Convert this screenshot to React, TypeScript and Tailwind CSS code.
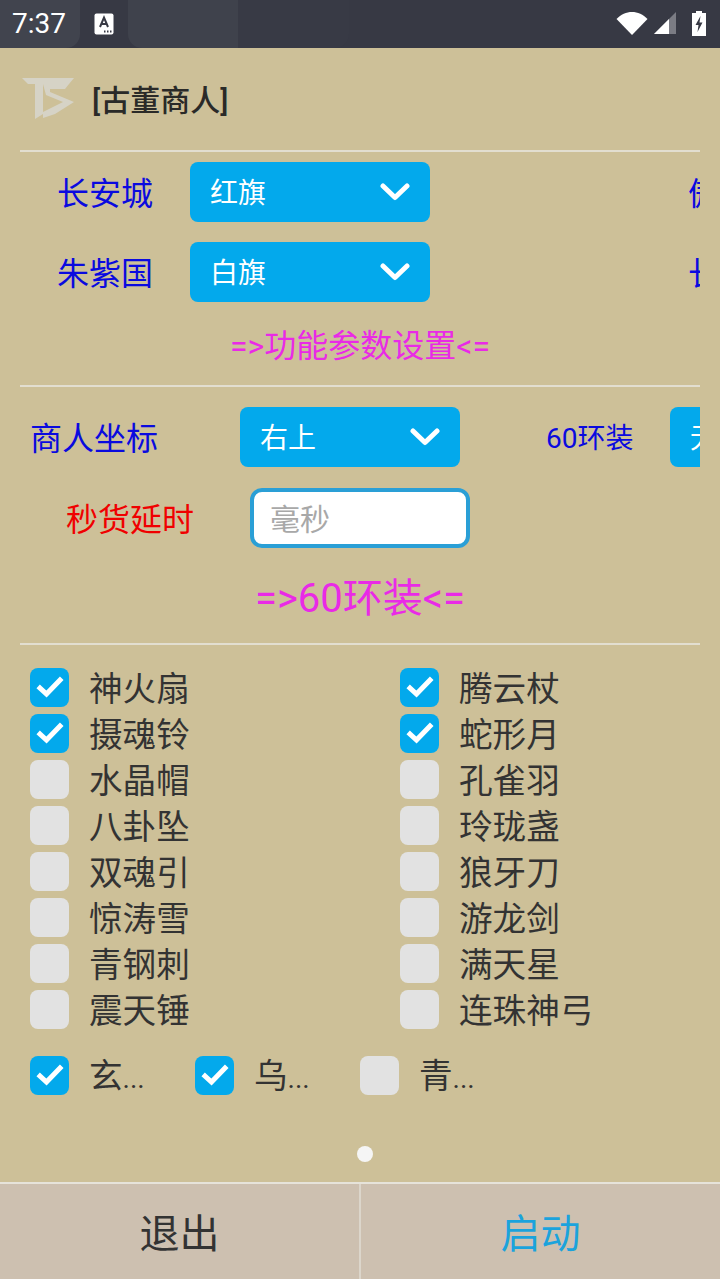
import React from "react";

const FONT = "font-['Roboto','Noto_Sans_CJK_SC',sans-serif]";

function Chevron() {
  return (
    <svg width="30" height="20" viewBox="0 0 30 20" fill="none" className="shrink-0">
      <path d="M3 4 L15 15.5 L27 4" stroke="#ffffff" strokeWidth="5" strokeLinecap="round" strokeLinejoin="round" />
    </svg>
  );
}

function Select({ text, width }: { text: string; width: string }) {
  return (
    <div className={`${width} h-[60px] shrink-0 rounded-[8px] bg-[#03a9ec] flex items-center justify-between pl-[20px] pr-[20px]`}>
      <span className="text-[28px] leading-none text-white mt-[4px]">{text}</span>
      <Chevron />
    </div>
  );
}

function Box({ on }: { on: boolean }) {
  return (
    <div className={`w-[39px] h-[39px] shrink-0 rounded-[8px] flex items-center justify-center ${on ? "bg-[#03a9ec]" : "bg-[#e2e2e2]"}`}>
      {on && (
        <svg width="30" height="26" viewBox="0 0 30 26" fill="none">
          <path d="M5 14 L11.5 20 L25 6" stroke="#ffffff" strokeWidth="5" strokeLinecap="square" />
        </svg>
      )}
    </div>
  );
}

function Check({ label, on }: { label: string; on: boolean }) {
  return (
    <div className="h-[46px] flex items-center">
      <Box on={on} />
      <span className="ml-[20px] text-[33.6px] leading-none text-[#333333] mt-[5px]">{label}</span>
    </div>
  );
}

function Short({ label, on }: { label: string; on: boolean }) {
  return (
    <div className="w-[165px] h-[40px] flex items-center shrink-0">
      <Box on={on} />
      <span className="ml-[20px] w-[60px] h-[40px] pt-[4px] text-[33.6px] leading-[36px] text-[#333333] whitespace-nowrap overflow-hidden">{label}<span className="text-[28px]">...</span></span>
    </div>
  );
}

function Divider() {
  return <div className="h-[2px] shrink-0 bg-[#e2ded0]" />;
}

const left = [
  ["神火扇", true],
  ["摄魂铃", true],
  ["水晶帽", false],
  ["八卦坠", false],
  ["双魂引", false],
  ["惊涛雪", false],
  ["青钢刺", false],
  ["震天锤", false],
] as const;

const right = [
  ["腾云杖", true],
  ["蛇形月", true],
  ["孔雀羽", false],
  ["玲珑盏", false],
  ["狼牙刀", false],
  ["游龙剑", false],
  ["满天星", false],
  ["连珠神弓", false],
] as const;

const label = "shrink-0 text-[32px] leading-none text-[#0a0adf] mt-[4px]";

export default function App() {
  return (
    <div className={`w-[720px] h-[1279px] flex flex-col overflow-hidden bg-[#cdc098] ${FONT}`}>
      {/* status bar */}
      <div className="h-[48px] shrink-0 bg-[#373944] flex items-stretch">
        <div className="w-[80px] bg-[#41444e] rounded-br-[14px] flex items-center pl-[12px]">
          <span className="text-[28px] leading-none text-white">7:37</span>
        </div>
        <div className="w-[48px] flex items-center pl-[14px]">
          <svg width="20" height="22" viewBox="0 0 20 22">
            <rect x="0.5" y="0.5" width="19" height="21" rx="2" fill="#ffffff" />
            <path d="M6 14 L10 4.5 L14 14 M7.4 11 H12.6" stroke="#373944" strokeWidth="2" fill="none" />
            <path d="M10 18.5 h1.5 M13 18.5 h1.5 M16 18.5 h1.5" stroke="#373944" strokeWidth="2" />
          </svg>
        </div>
        <div className="w-[110px] bg-[#3f424c] rounded-bl-[14px]" />
        <div className="w-[111px] bg-[#383a45] rounded-br-[14px]" />
        <div className="flex-1 flex items-center justify-end pr-[14px]">
          <svg width="32" height="24" viewBox="0 0 32 24" className="mr-[6px] mt-[-2px]">
            <path d="M0.5 8 C9 -1.5 23 -1.5 31.5 8 L16 24 Z" fill="#ffffff" />
          </svg>
          <svg width="22" height="22" viewBox="0 0 22 22" className="mr-[16px] mt-[-2px]">
            <path d="M0 22 L22 0 V22 Z" fill="#7b7c84" />
            <path d="M0 22 L15 7 V22 Z" fill="#ffffff" />
          </svg>
          <svg width="14" height="25" viewBox="0 0 14 25" className="mt-[-2px]">
            <path d="M4 0 H10 V2 H14 V25 H0 V2 H4 Z" fill="#ffffff" />
            <path d="M8.5 5 L3.5 14 H6.5 L5.5 21 L10.5 11.5 H7.5 Z" fill="#373944" />
          </svg>
        </div>
      </div>

      {/* content */}
      <div className="flex-1 flex flex-col px-[20px] overflow-hidden">
        <div className="h-[102px] shrink-0 flex items-center">
          <svg width="52" height="41" viewBox="0 0 52 41" className="ml-[2px] shrink-0 mt-[-2px]">
            <path d="M0 0 H52 L47 6 H21 V36 L13 41 V6 H6 Z" fill="#d6d3c6" />
            <path d="M21 6 H47 L43 11 H28 V14 L52 24 L33 36 L21 40 V34 L41 24 L24 17 Z" fill="#d6d3c6" />
          </svg>
          <span className="ml-[18px] text-[30px] leading-none font-medium text-[#2a2a28] whitespace-nowrap mt-[4px]">[古董商人]</span>
        </div>
        <Divider />

        <div className="overflow-hidden shrink-0">
          <div className="mt-[10px] h-[60px] flex items-center w-[900px]">
            <span className={`w-[170px] pl-[37px] ${label}`}>长安城</span>
            <Select text="红旗" width="w-[240px]" />
            <span className={`ml-[258px] ${label}`}>傲来国</span>
          </div>
          <div className="mt-[20px] h-[60px] flex items-center w-[900px]">
            <span className={`w-[170px] pl-[37px] ${label}`}>朱紫国</span>
            <Select text="白旗" width="w-[240px]" />
            <span className={`ml-[258px] ${label}`}>长寿村</span>
          </div>
        </div>

        <div className="h-[83px] shrink-0 flex items-center justify-center text-[32px] leading-none text-[#e92ae6] whitespace-nowrap"><span className="mt-[4px]">=&gt;功能参数设置&lt;=</span></div>
        <Divider />

        <div className="overflow-hidden shrink-0">
          <div className="mt-[20px] h-[60px] flex items-center w-[900px]">
            <span className={`w-[220px] pl-[10px] ${label}`}>商人坐标</span>
            <Select text="右上" width="w-[220px]" />
            <span className="ml-[86px] w-[124px] shrink-0 text-[28px] leading-none text-[#0a0adf] mt-[4px]">60环装</span>
            <Select text="无" width="w-[220px]" />
          </div>
        </div>

        <div className="mt-[21px] h-[60px] shrink-0 flex items-center">
          <span className="w-[230px] pl-[46px] shrink-0 text-[32px] leading-none text-[#f00000] mt-[4px]">秒货延时</span>
          <div className="w-[220px] h-[60px] rounded-[12px] border-[4px] border-[#2a9fd6] bg-white flex items-center pl-[17px]">
            <span className="text-[30px] leading-none text-[#a8a8a8] mt-[4px] ml-[-1px]">毫秒</span>
          </div>
        </div>

        <div className="h-[95px] shrink-0 flex items-center justify-center text-[40px] leading-none text-[#e92ae6] whitespace-nowrap"><span className="mt-[6px]">=&gt;60环装&lt;=</span></div>
        <Divider />

        <div className="mt-[19px] shrink-0 flex pl-[10px]">
          <div className="w-[370px] shrink-0 flex flex-col">
            {left.map(([l, on]) => <Check key={l} label={l} on={on} />)}
          </div>
          <div className="flex-1 flex flex-col">
            {right.map(([l, on]) => <Check key={l} label={l} on={on} />)}
          </div>
        </div>

        <div className="mt-[23px] shrink-0 flex pl-[10px]">
          <Short label="玄" on={true} />
          <Short label="乌" on={true} />
          <Short label="青" on={false} />
        </div>

        <div className="flex-1 flex items-center justify-center pt-[30px]">
          <div className="w-[16px] h-[16px] rounded-full bg-[#f5f5f5] mr-[-10px]" />
        </div>
      </div>

      {/* footer */}
      <div className="h-[97px] shrink-0 flex bg-[#cdc0b0] border-t-[2px] border-[#e6e3da]">
        <div className="w-[359px] pt-[6px] flex items-center justify-center text-[40px] leading-none text-[#333333]">退出</div>
        <div className="w-[2px] bg-[#dcd6cb]" />
        <div className="flex-1 pt-[6px] flex items-center justify-center text-[40px] leading-none text-[#1ba3dc]">启动</div>
      </div>
    </div>
  );
}
